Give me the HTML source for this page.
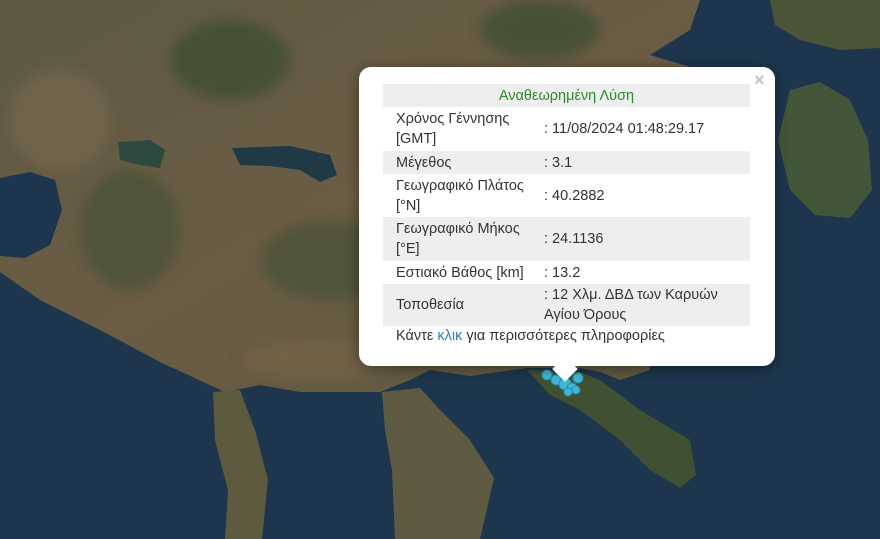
<!DOCTYPE html>
<html><head><meta charset="utf-8"><style>
html,body{margin:0;padding:0;width:880px;height:539px;overflow:hidden;background:#1e3850;font-family:"Liberation Sans","DejaVu Sans",sans-serif}
svg{position:absolute;left:0;top:0}
.pop{position:absolute;left:359px;top:67px;width:416px;height:299px;background:#fff;border-radius:12px;box-shadow:0 3px 14px rgba(0,0,0,.4)}
.tip{position:absolute;left:556px;top:360px;width:18px;height:18px;background:#fff;transform:rotate(45deg)}
.x{position:absolute;left:754px;top:70px;color:#c3c3c3;font:bold 18px "Liberation Sans",sans-serif}
table{position:absolute;left:383px;top:84px;width:367px;border-collapse:collapse;font-size:14.5px;color:#333}
td{padding:0 0 0 13px;line-height:20px;vertical-align:middle;white-space:nowrap}
tr.g td{background:#eeeeee}
.h td{text-align:center;color:#2a8a2a;height:23px}
.f{position:absolute;left:396px;top:328px;font-size:14.5px;color:#333}
.f span{color:#2a81b8}
</style></head><body>
<svg width="880" height="539" viewBox="0 0 880 539">
<defs>
<filter id="b"><feGaussianBlur stdDeviation="6"/></filter>
<linearGradient id="l" x1="0" y1="0" x2="1" y2="1"><stop offset="0" stop-color="#5e5a43"/><stop offset=".5" stop-color="#6b5c44"/><stop offset="1" stop-color="#5d5a40"/></linearGradient>
<clipPath id="c"><path d="M0 0H700L690 30L650 55L700 70L640 120L650 370L620 380L600 372L580 368L527 368L470 376L430 370L410 380L380 392L300 392L260 385L225 392L160 362L100 330L40 300L0 272Z"/></clipPath>
</defs>
<rect width="880" height="539" fill="#1d364d"/>
<path fill="url(#l)" d="M0 0H700L690 30L650 55L700 70L640 120L650 370L620 380L600 372L580 368L527 368L470 376L430 370L410 380L380 392L300 392L260 385L225 392L160 362L100 330L40 300L0 272Z"/>
<path fill="#5d5a40" d="M213 392L240 390L255 430L268 480L262 539H225L228 490L215 440Z"/>
<path fill="#5f5b42" d="M382 392L420 388L440 410L470 440L494 478L480 539H395L392 470L385 430Z"/>
<path fill="#3f5132" d="M527 370L580 372L600 380L640 410L690 440L696 475L680 488L650 470L620 440L580 410L550 395Z"/>
<path fill="#4a5436" d="M770 0H880V48L840 50L800 40L775 25Z"/>
<path fill="#44563a" d="M790 90L820 82L850 100L868 140L872 190L850 218L815 215L790 190L778 140Z"/>
<g clip-path="url(#c)">
<g filter="url(#b)" opacity=".55">
<ellipse cx="230" cy="60" rx="60" ry="40" fill="#2f4a2a"/>
<ellipse cx="540" cy="30" rx="60" ry="30" fill="#2f4a2a"/>
<ellipse cx="130" cy="230" rx="50" ry="60" fill="#3d4f30"/>
<ellipse cx="330" cy="260" rx="70" ry="40" fill="#3e5030"/>
<ellipse cx="440" cy="120" rx="60" ry="50" fill="#3c4f30"/>
<ellipse cx="610" cy="200" rx="40" ry="80" fill="#3a4d2f"/>
<ellipse cx="60" cy="120" rx="50" ry="50" fill="#7a6a52"/>
<ellipse cx="320" cy="360" rx="80" ry="20" fill="#7a6648"/>
</g>
</g>
<path fill="#1d364d" d="M0 178L30 172L55 180L62 210L50 245L25 258L0 256Z"/>
<path fill="#2e4a40" d="M118 142L150 140L165 150L160 168L140 165L120 160Z"/>
<path fill="#1f3a45" d="M232 148L290 146L330 155L337 175L320 182L300 170L270 166L240 165Z"/>
<g fill="#3fb8d6" stroke="#2a8fb0" stroke-width="1">
<circle cx="547" cy="375" r="5"/><circle cx="556" cy="380" r="5"/><circle cx="565" cy="384" r="6"/><circle cx="572" cy="388" r="5"/><circle cx="578" cy="378" r="5"/><circle cx="568" cy="392" r="4"/><circle cx="576" cy="390" r="4"/>
</g>
</svg>
<div class="pop"></div>
<div class="tip"></div>
<div class="x">×</div>
<table>
<tr class="g h"><td colspan="2" style="padding:0">Αναθεωρημένη Λύση</td></tr>
<tr style="height:44px"><td style="width:135px">Χρόνος Γέννησης<br>[GMT]</td><td>: 11/08/2024 01:48:29.17</td></tr>
<tr class="g" style="height:23px"><td>Μέγεθος</td><td>: 3.1</td></tr>
<tr style="height:43px"><td>Γεωγραφικό Πλάτος<br>[°N]</td><td>: 40.2882</td></tr>
<tr class="g" style="height:44px"><td>Γεωγραφικό Μήκος<br>[°E]</td><td>: 24.1136</td></tr>
<tr style="height:23px"><td>Εστιακό Βάθος [km]</td><td>: 13.2</td></tr>
<tr class="g" style="height:42px"><td>Τοποθεσία</td><td>: 12 Χλμ. ΔΒΔ των Καρυών<br>Αγίου Όρους</td></tr>
</table>
<div class="f">Κάντε <span>κλικ</span> για περισσότερες πληροφορίες</div>
</body></html>
